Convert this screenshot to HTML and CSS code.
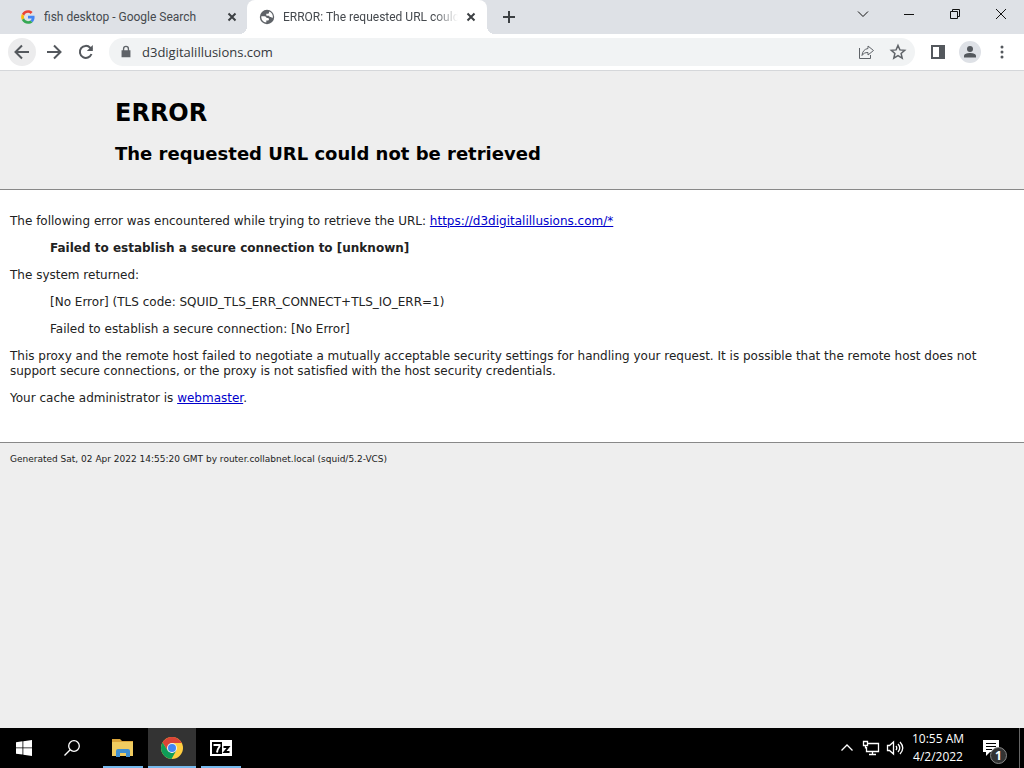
FILE: index.html
```html
<!DOCTYPE html>
<html lang="en">
<head>
<meta charset="UTF-8">
<title>ERROR: The requested URL could not be retrieved</title>
<meta name="viewport" content="width=device-width, initial-scale=1.0">
<link rel="stylesheet" href="styles.css">
</head>
<body>

<header class="tabstrip">
    <div class="tab">
        <svg class="favicon" width="16" height="16" viewBox="-4 -4 56 56">
            <path fill="#ea4335" d="M24 9.500c3.500 0 6.700 1.200 9.200 3.600l6.900-6.900C35.900 2.400 30.500 0 24 0 14.600 0 6.500 5.400 2.600 13.200l8 6.200C12.400 13.700 17.700 9.500 24 9.500z"/>
            <path fill="#4285f4" d="M47 24.600c0-1.600-.2-3.100-.4-4.600H24v9h12.900c-.6 3-2.300 5.500-4.800 7.200l7.700 6C44.400 38 47 31.800 47 24.600z"/>
            <path fill="#fbbc05" d="M10.500 28.600c-.5-1.500-.8-3-.8-4.600s.3-3.100.8-4.600l-8-6.200C.9 16.500 0 20.100 0 24s.9 7.500 2.600 10.800l7.900-6.200z"/>
            <path fill="#34a853" d="M24 48c6.500 0 11.900-2.100 15.900-5.800l-7.700-6c-2.200 1.500-4.900 2.300-8.200 2.300-6.300 0-11.600-4.200-13.500-9.900l-8 6.200C6.500 42.600 14.600 48 24 48z"/>
        </svg>
        <span class="tab-title">fish desktop - Google Search</span>
        <button class="tab-close" type="button" aria-label="Close tab"><svg width="16" height="16" viewBox="0 0 16 16"><path d="M4.500 4.500l7 7M11.500 4.500l-7 7"/></svg></button>
    </div>
    <div class="tab active">
        <svg class="favicon" width="16" height="16" viewBox="0 0 16 16">
            <circle cx="8" cy="8" r="7.200" fill="#5f6368"/>
            <path fill="#fff" d="M2.300 7.300h3.200c1.200 0 2 .8 2 1.700h1.200c.8 0 1.300.6 1.300 1.300 0 .9-.7 1.300-1.600 1.300H7.300v2C4.200 13.400 2 10.600 2.300 7.300zM10 2.500v.9c0 .8-.6 1.300-1.400 1.300H7.300v1.200c0 .6.5.9 1.100.9h1.200c.6 0 1 .5 1 1.100h1.100c.7 0 1 .5 1.300 1.200.7-.2.9-.7.900-1.300C13.800 5.200 12.400 3.200 10 2.500z"/>
        </svg>
        <span class="tab-title">ERROR: The requested URL could</span>
        <button class="tab-close" type="button" aria-label="Close tab"><svg width="16" height="16" viewBox="0 0 16 16"><path d="M4.500 4.500l7 7M11.500 4.500l-7 7"/></svg></button>
    </div>
    <button class="new-tab" type="button" aria-label="New tab"><svg width="16" height="16" viewBox="0 0 16 16"><path d="M8 2v12M2 8h12"/></svg></button>
    <div class="window-controls">
        <button type="button" aria-label="Search tabs"><svg width="12" height="12" viewBox="0 0 12 12"><path d="M1 3.500l5 5 5-5"/></svg></button>
        <button type="button" aria-label="Minimize"><svg width="12" height="12" viewBox="0 0 12 12"><path d="M1 6.500h10"/></svg></button>
        <button type="button" aria-label="Restore"><svg width="12" height="12" viewBox="0 0 12 12"><path d="M1.500 3.500h7v7h-7zM3.500 3.500v-2h7v7h-2"/></svg></button>
        <button type="button" aria-label="Close"><svg width="12" height="12" viewBox="0 0 12 12"><path d="M1 1l10 10M11 1L1 11"/></svg></button>
    </div>
</header>

<nav class="toolbar">
    <button class="tool hover" type="button" aria-label="Back"><svg width="20" height="20" viewBox="0 0 20 20"><path d="M17 10H4M10 3.500L3.500 10l6.500 6.500"/></svg></button>
    <button class="tool" type="button" aria-label="Forward"><svg width="20" height="20" viewBox="0 0 20 20"><path d="M3 10h13M10 3.500l6.500 6.500-6.500 6.500"/></svg></button>
    <button class="tool" type="button" aria-label="Reload"><svg width="20" height="20" viewBox="0 0 20 20"><path d="M15.500 12a6 6 0 1 1-1.300-6.300L16 7.500"/><path class="solid" d="M16.800 3v6h-6z"/></svg></button>
    <div class="omnibox">
        <svg width="16" height="16" viewBox="-1 -1 18 18"><path fill="#5f6368" d="M4.500 6V4.500a3.500 3.500 0 0 1 7 0V6H13v8H3V6zM6 6h4V4.500a2 2 0 0 0-4 0z"/></svg>
        <input type="text" value="d3digitalillusions.com" aria-label="Address">
        <button type="button" aria-label="Share"><svg width="18" height="18" viewBox="0 0 18 18"><path class="thin" d="M2.500 5v10.500h11V12M11 3l5.500 4.500L11 12V9.500c-3 0-4.500.8-6 3 .3-4 2.500-6.500 6-7z"/></svg></button>
        <button type="button" aria-label="Bookmark"><svg width="18" height="18" viewBox="0 0 18 18"><path class="star" d="M9 2.500l1.900 4.400 4.800.4-3.600 3.200 1.100 4.700L9 12.700l-4.200 2.500 1.100-4.700-3.600-3.200 4.800-.4z"/></svg></button>
    </div>
    <button class="tool" type="button" aria-label="Side panel"><svg width="16" height="16" viewBox="0 0 16 16"><path class="solid" fill-rule="evenodd" d="M1 1h14v14H1zm2 2v10h6V3z"/></svg></button>
    <button class="tool" type="button" aria-label="Profile"><svg width="22" height="22" viewBox="0 0 22 22"><circle cx="11" cy="11" r="11" fill="#dee1e6"/><circle class="solid" cx="11" cy="8" r="3"/><path class="solid" d="M5 16.500v-1.500c0-2.300 3.500-3 6-3s6 .7 6 3v1.500z"/></svg></button>
    <button class="tool" type="button" aria-label="Menu"><svg width="16" height="16" viewBox="0 0 16 16"><g class="solid"><circle cx="8" cy="3" r="1.500"/><circle cx="8" cy="8" r="1.500"/><circle cx="8" cy="13" r="1.500"/></g></svg></button>
</nav>

<main class="page">
    <div class="titles">
        <h1>ERROR</h1>
        <h2>The requested URL could not be retrieved</h2>
    </div>
    <div class="content">
        <p>The following error was encountered while trying to retrieve the URL: <a href="#">https://d3digitalillusions.com/*</a></p>
        <blockquote><p><b>Failed to establish a secure connection to [unknown]</b></p></blockquote>
        <p>The system returned:</p>
        <blockquote>
            <p>[No Error] (TLS code: SQUID_TLS_ERR_CONNECT+TLS_IO_ERR=1)</p>
            <p>Failed to establish a secure connection: [No Error]</p>
        </blockquote>
        <p>This proxy and the remote host failed to negotiate a mutually acceptable security settings for handling your request. It is possible that the remote host does not support secure connections, or the proxy is not satisfied with the host security credentials.</p>
        <p>Your cache administrator is <a href="#">webmaster</a>.</p>
    </div>
    <p class="generated">Generated Sat, 02 Apr 2022 14:55:20 GMT by router.collabnet.local (squid/5.2-VCS)</p>
</main>

<footer class="taskbar">
    <button type="button" aria-label="Start"><svg width="16" height="16" viewBox="0 0 16 16"><path fill="#fff" d="M0 2.200l6.500-.9v6.200H0zM7.300 1.200L16 0v7.500H7.300zM0 8.300h6.500v6.300L0 13.700zM7.300 8.300H16V16l-8.700-1.200z"/></svg></button>
    <button type="button" aria-label="Search"><svg width="18" height="18" viewBox="0 0 18 18"><path class="line" d="M7.200 10.800L1.500 16.500"/><circle class="line" cx="11" cy="7" r="5.300"/></svg></button>
    <div class="apps">
        <button class="open" type="button" aria-label="File Explorer"><svg width="22" height="20" viewBox="0 0 22 20">
            <path fill="#dba53a" d="M0 1h8l2 2h11v3H0z"/>
            <path fill="#f0cc60" d="M0 4h21v14H0z"/>
            <path fill="#3f8fd0" d="M4 13q0-2 2-2h10q2 0 2 2v6h-4v-4H8v4H4z"/>
        </svg></button>
        <button class="open current" type="button" aria-label="Google Chrome"><svg width="22" height="22" viewBox="0 0 22 22">
            <circle cx="11" cy="11" r="11" fill="#ffcd40"/>
            <path fill="#db4437" d="M1.500 5.500A11 11 0 0 1 20.500 5.500L20.700 6H11L6.700 13.500z"/>
            <path fill="#0f9d58" d="M1.500 5.500L6.700 13.500 11 16l4.300-2.500L10.500 22A11 11 0 0 1 1.500 5.500z"/>
            <circle cx="11" cy="11" r="5" fill="#f1f1f1"/>
            <circle cx="11" cy="11" r="4" fill="#4285f4"/>
        </svg></button>
        <button class="open" type="button" aria-label="7-Zip"><svg width="22" height="16" viewBox="0 0 22 16">
            <path fill="#fff" d="M0 0h22v16H0z"/>
            <path fill="#000" d="M2 2h10v12H2z"/>
            <path fill="none" stroke="#fff" stroke-width="2" d="M3.500 5h6v1.500q-2 2.500-2.500 6"/>
            <path fill="none" stroke="#000" stroke-width="2" d="M13.500 7h5l-4 5h5"/>
        </svg></button>
    </div>
    <div class="tray">
        <button type="button" aria-label="Show hidden icons"><svg width="14" height="14" viewBox="0 0 14 14"><path class="line" d="M1.500 9.500L7 4l5.500 5.500"/></svg></button>
        <button type="button" aria-label="Network"><svg width="18" height="16" viewBox="0 0 18 16"><path class="line" d="M6 3.500h10.500v8H4.500V7M10.500 11.500v3M7 14.500h7M1.500 1.500h4v4h-4zM3.500 5.500v3"/></svg></button>
        <button type="button" aria-label="Volume"><svg width="18" height="16" viewBox="0 0 18 16"><path class="line" d="M1.500 5.500h2L7.500 2v12l-4-3.500h-2zM10 6q1.500 2 0 4M12 4q3.500 4 0 8M14 2q5.500 6 0 12"/></svg></button>
        <button class="clock" type="button"><span>10:55 AM</span><span>4/2/2022</span></button>
        <button class="notices" type="button" aria-label="Notifications">
            <svg width="16" height="16" viewBox="0 0 16 16"><path fill="#fff" d="M0 0h16v12H7l-4 4v-4H0z"/><path stroke="#000" d="M3 3.500h10M3 6.500h10M3 9.500h6"/></svg>
            <span class="count">1</span>
        </button>
        <button class="show-desktop" type="button" aria-label="Show desktop"></button>
    </div>
</footer>

</body>
</html>
```
FILE: styles.css
```css
* {
    box-sizing: border-box;
}

body {
    display: flex;
    flex-direction: column;
    margin: 0;
    min-height: 100vh;
    background: #eee;
    font-family: "Open Sans", sans-serif;
    font-size: 12px;
}

button {
    display: flex;
    align-items: center;
    justify-content: center;
    flex: none;
    margin: 0;
    padding: 0;
    border: none;
    background: none;
    color: inherit;
    font: inherit;
}

svg {
    display: block;
    flex: none;
}

/* tabs */

.tabstrip {
    display: flex;
    height: 34px;
    background: #dee1e6;
    color: #45494e;
    font-family: Roboto, sans-serif;
}

.tab {
    display: flex;
    align-items: center;
    flex: 0 1 240px;
    min-width: 0;
    padding: 0 8px 0 12px;
    border-radius: 8px 8px 0 0;
}

.tab:first-child {
    flex-basis: 247px;
    padding-left: 20px;
    padding-right: 7px;
}

.tab.active {
    position: relative;
    background: #fff;
}

/* flared feet of the active tab */
.tab.active:before,
.tab.active:after {
    content: '';
    position: absolute;
    bottom: 0;
    width: 8px;
    height: 8px;
}

.tab.active:before {
    left: -8px;
    background: radial-gradient(circle at 0 0, transparent 8px, #fff 8px);
}

.tab.active:after {
    right: -8px;
    background: radial-gradient(circle at 100% 0, transparent 8px, #fff 8px);
}

.tab-title {
    flex: 1;
    margin: 0 5px 0 8px;
    overflow: hidden;
    white-space: nowrap;
}

.tab.active .tab-title {
    -webkit-mask-image: linear-gradient(to left, transparent, #000 24px);
            mask-image: linear-gradient(to left, transparent, #000 24px);
}

.tab-close path,
.new-tab path {
    fill: none;
    stroke: #3c4043;
    stroke-width: 2;
}

.new-tab {
    width: 44px;
}

.window-controls {
    display: flex;
    margin-left: auto;
    height: 28px;
}

.window-controls button {
    width: 46px;
}

.window-controls path {
    fill: none;
    stroke: #111;
}

/* toolbar */

.toolbar {
    display: flex;
    align-items: center;
    gap: 4px;
    padding: 0 8px;
    height: 37px;
    border-bottom: 1px solid #d5d7da;
    background: #fff;
}

.tool {
    width: 28px;
    height: 28px;
    border-radius: 50%;
}

.tool.hover {
    background: #ececed;
}

.tool path {
    fill: none;
    stroke: #54585d;
    stroke-width: 2;
}

.tool .solid {
    fill: #54585d;
    stroke: none;
}

.omnibox {
    display: flex;
    align-items: center;
    flex: 1;
    margin: 0 5px;
    padding: 0 9px;
    height: 28px;
    border-radius: 14px;
    background: #f1f3f4;
}

.omnibox input {
    flex: 1;
    min-width: 0;
    margin: 0 8px;
    padding: 0;
    border: none;
    outline: none;
    background: none;
    color: #35383c;
    font: 13px "Open Sans", sans-serif;
}

.omnibox button {
    width: 32px;
}

.omnibox button:last-child {
    margin-right: -8px;
}

.omnibox .thin,
.omnibox .star {
    fill: none;
    stroke: #5f6368;
}

.omnibox .star {
    stroke-width: 1.5;
}

/* error page */

.page {
    flex: 1;
    color: #222;
    font-family: Verdana, "DejaVu Sans", sans-serif;
    line-height: 15px;
}

.titles {
    padding: 26px 10px 23px 115px;
    border-bottom: 1px solid #888;
    color: #000;
}

.titles h1 {
    margin: 0 0 13px;
    font-size: 24px;
    line-height: 32px;
}

.titles h2 {
    margin: 0;
    font-size: 18px;
    line-height: 24px;
}

.content {
    padding: 12px 10px 24px;
    border-bottom: 1px solid #888;
    background: #fff;
}

.content p {
    margin: 12px 0;
}

.content blockquote {
    margin: 12px 40px;
}

.content a {
    color: #0000cc;
}

.generated {
    margin: 9px 10px;
    font-size: 9px;
}

/* taskbar */

.taskbar {
    display: flex;
    height: 40px;
    background: #000;
    color: #fff;
}

.taskbar > button {
    width: 48px;
}

.taskbar .line {
    fill: none;
    stroke: #fff;
    stroke-width: 1.3;
}

.apps {
    display: flex;
    gap: 9px;
    margin-left: 7px;
}

.open {
    width: 40px;
    box-shadow: inset 0 -2px #76b9ed;
}

.open.current {
    margin: 0 -4px;
    width: 48px;
    background: #333;
}

.tray {
    display: flex;
    margin-left: auto;
}

.tray button {
    width: 24px;
}

.tray .clock {
    flex-direction: column;
    width: 62px;
    line-height: 18px;
}

.tray .notices {
    position: relative;
    padding-right: 6px;
    width: 50px;
}

.count {
    position: absolute;
    right: 12px;
    bottom: 4px;
    width: 17px;
    height: 17px;
    border: 1px solid #888;
    border-radius: 50%;
    background: #333;
    font-size: 12px;
    font-weight: bold;
    line-height: 15px;
}

.tray .show-desktop {
    width: 5px;
    border-left: 1px solid #666;
}
```
